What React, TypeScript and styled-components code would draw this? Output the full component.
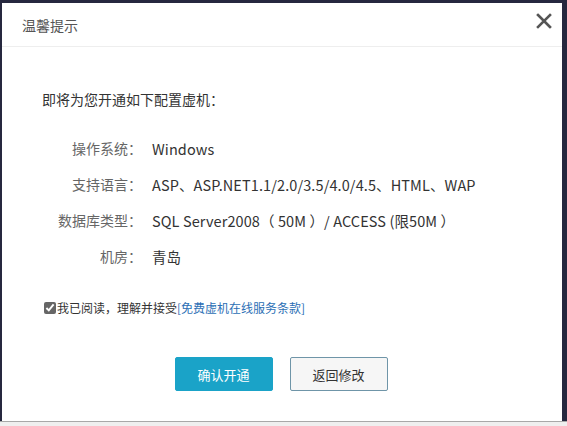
import styled, { createGlobalStyle } from 'styled-components';

const GlobalStyle = createGlobalStyle`
  html, body {
    margin: 0;
    padding: 0;
    background: #f0f0f0;
  }
  body {
    font-family: 'Noto Sans CJK SC', 'Liberation Sans', sans-serif;
  }
`;

const rows = [
  { label: '操作系统：', value: 'Windows' },
  { label: '支持语言：', value: 'ASP、ASP.NET1.1/2.0/3.5/4.0/4.5、HTML、WAP' },
  { label: '数据库类型：', value: 'SQL Server2008（ 50M ）/ ACCESS (限50M ）' },
  { label: '机房：', value: '青岛' },
];

const App = () => {
  return (
    <>
      <GlobalStyle />
      <Backdrop>
        <Dialog>
          <Header>
            <Title>温馨提示</Title>
            <CloseButton aria-label="关闭">
              <svg width="16" height="16" viewBox="0 0 16 16">
                <path d="M2 2 L14 14 M14 2 L2 14" stroke="#555" strokeWidth="2.6" strokeLinecap="square" />
              </svg>
            </CloseButton>
          </Header>
          <Body>
            <Intro>即将为您开通如下配置虚机：</Intro>
            <InfoList>
              {rows.map((row) => (
                <InfoRow key={row.label}>
                  <Label>{row.label}</Label>
                  <Value>{row.value}</Value>
                </InfoRow>
              ))}
            </InfoList>
            <Agreement>
              <Checkbox type="checkbox" defaultChecked />
              我已阅读，理解并接受<Link href="#">[免费虚机在线服务条款]</Link>
            </Agreement>
            <Actions>
              <PrimaryButton>确认开通</PrimaryButton>
              <SecondaryButton>返回修改</SecondaryButton>
            </Actions>
          </Body>
        </Dialog>
      </Backdrop>
      <BottomStrip />
    </>
  );
};

const Backdrop = styled.div`
  background: #26283f;
  height: 421px;
  padding: 3px 5px 0 2px;
  box-sizing: border-box;
`;

const Dialog = styled.div`
  background: #fff;
  height: 418px;
  display: flex;
  flex-direction: column;
`;

const Header = styled.div`
  height: 44px;
  border-bottom: 1px solid #eeeeee;
  display: flex;
  align-items: center;
  justify-content: space-between;
  padding: 0 10px 0 20px;
  box-sizing: border-box;
`;

const Title = styled.h3`
  margin: 0;
  font-size: 14px;
  font-weight: normal;
  color: #555;
  margin-top: 1px;
`;

const CloseButton = styled.button`
  border: none;
  background: none;
  padding: 0;
  width: 16px;
  height: 16px;
  margin-top: -7px;
  cursor: pointer;
  display: flex;
`;

const Body = styled.div`
  padding: 42px 40px 0 40px;
  display: flex;
  flex-direction: column;
`;

const Intro = styled.p`
  margin: 0;
  font-size: 14px;
  line-height: 20px;
  color: #333;
`;

const InfoList = styled.div`
  margin-top: 29px;
  display: flex;
  flex-direction: column;
  gap: 16px;
`;

const InfoRow = styled.div`
  display: flex;
  align-items: center;
  height: 20px;
  font-size: 14px;
`;

const Label = styled.span`
  width: 100px;
  text-align: right;
  color: #666;
  flex-shrink: 0;
`;

const Value = styled.span`
  margin-left: 10px;
  color: #333;
  white-space: nowrap;
  font-size: 14.5px;
  letter-spacing: 0.1px;
`;

const Agreement = styled.label`
  margin-top: 34px;
  display: flex;
  align-items: center;
  font-size: 12px;
  color: #333;
  line-height: 16px;
`;

const Checkbox = styled.input`
  margin: 0 1px 0 2px;
  width: 12px;
  height: 12px;
  accent-color: #666;
`;

const Link = styled.a`
  color: #2c6fb5;
  text-decoration: none;
`;

const Actions = styled.div`
  margin-top: 41px;
  display: flex;
  justify-content: center;
  gap: 17px;
  padding-right: 2px;
`;

const BaseButton = styled.button`
  width: 98px;
  height: 34px;
  font-size: 13px;
  font-family: inherit;
  border-radius: 2px;
  cursor: pointer;
`;

const PrimaryButton = styled(BaseButton)`
  background: #1aa3c8;
  border: 1px solid #1aa3c8;
  color: #fff;
`;

const SecondaryButton = styled(BaseButton)`
  background: #f6f6f6;
  border: 1px solid #6f95a8;
  color: #333;
`;

const BottomStrip = styled.div`
  height: 5px;
  border-top: 1px solid #a8a8a8;
  background: #efefef;
`;

export default App;
